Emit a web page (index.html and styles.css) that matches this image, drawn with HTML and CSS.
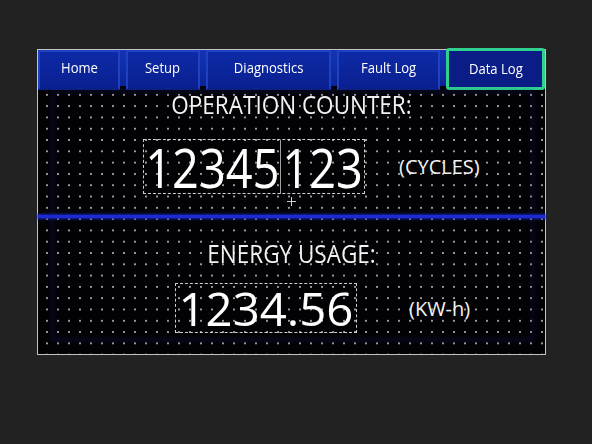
FILE: index.html
```html
<!DOCTYPE html>
<html lang="en">
<head>
    <meta charset="UTF-8">
    <meta name="viewport" content="width=device-width, initial-scale=1.0">
    <title>HMI - Data Log</title>
    <link rel="stylesheet" href="styles.css">
</head>
<body>
    <div class="screen">
        <nav class="tabs">
            <span class="tab"><span class="label">Home</span></span>
            <span class="tab"><span class="label">Setup</span></span>
            <span class="tab"><span class="label">Diagnostics</span></span>
            <span class="tab"><span class="label">Fault Log</span></span>
            <span class="tab active"><span class="label">Data Log</span></span>
        </nav>

        <section class="block counter">
            <h2 class="caption">OPERATION COUNTER:</h2>
            <div class="readout">
                <div class="field">
                    <span class="value">12345<i class="caret"></i>123</span>
                </div>
                <span class="unit">(CYCLES)</span>
            </div>
            <div class="cross"></div>
        </section>

        <div class="divider"></div>

        <section class="block energy">
            <h2 class="caption">ENERGY USAGE:</h2>
            <div class="readout">
                <div class="field">
                    <span class="value">1234.56</span>
                </div>
                <span class="unit">(KW-h)</span>
            </div>
        </section>

        <!-- faint selection frame left by the editor -->
        <div class="selection"></div>
    </div>
</body>
</html>
```

FILE: styles.css
```css
body {
    margin: 0;
    height: 444px;
    background-color: #222222;
    font-family: "Open Sans", "Noto Sans", sans-serif;
    color: #f2f2f2;
    overflow: hidden;
}

.screen {
    position: relative;
    width: 507px;
    height: 304px;
    margin: 49px 0 0 37px;
    border: 1px solid #c4c4c4;
    background-color: #020204;
    /* dotted design grid */
    background-image: radial-gradient(circle at 1px 1px, #9c9c9c 0.8px, transparent 1.3px);
    background-size: 11px 11.3px;
    background-position: 8px 10px;
}

/* tab bar */
.tabs {
    display: grid;
    grid-template-columns: 82px 74px 125px 103px 99px;
    gap: 6px;
    height: 36px;
    background: linear-gradient(#1534b4, #0c2496);
}

.tab {
    display: flex;
    justify-content: center;
    align-items: center;
    padding-bottom: 5px;
    background: linear-gradient(#0d2aa6, #0a2090);
    border: 2px solid #1d42c4;
    border-bottom-color: #0a1f86;
    font-size: 14.5px;
    color: #ffffff;
}

.tab.active {
    margin-top: -2px;
    height: 34px;
    padding-bottom: 2px;
    background: #0a1c86;
    border: 3px solid #2fd08e;
    border-radius: 3px;
}

.label {
    display: inline-block;
    transform: scaleX(0.9);
}

/* readout blocks */
.block {
    display: flex;
    flex-direction: column;
}

.counter {
    height: 129px;
}

.energy {
    height: 136px;
}

.caption {
    margin: 3px 0 0;
    font-size: 25px;
    font-weight: 400;
    line-height: 30px;
    text-align: center;
    transform: scaleX(0.9);
}

.energy .caption {
    margin-top: 20px;
}

.readout {
    display: flex;
    align-items: center;
}

.field {
    display: flex;
    justify-content: center;
    align-items: center;
    border: 1px dashed #cfcfcf;
}

.counter .readout {
    margin: 20px 0 0 105px;
}

.counter .field {
    width: 220px;
    height: 53px;
}

.energy .readout {
    margin: 15px 0 0 137px;
}

.energy .field {
    width: 180px;
    height: 48px;
}

.value {
    display: inline-flex;
    align-items: center;
    font-weight: 400;
    white-space: nowrap;
    color: #ffffff;
}

.counter .value {
    font-size: 54px;
    line-height: 54px;
    transform: scaleX(0.87);
}

.energy .value {
    font-size: 46px;
    line-height: 46px;
    transform: scaleX(1.03);
}

.caret {
    display: inline-block;
    width: 1px;
    height: 54px;
    margin: 0 1px;
    background-color: #b8b8b8;
}

.unit {
    font-size: 20px;
}

.counter .unit {
    margin-left: 34px;
}

.energy .unit {
    margin-left: 52px;
}

/* crosshair marker under the counter */
.cross {
    width: 9px;
    height: 9px;
    margin: 3px 0 0 249px;
    background:
        linear-gradient(#d0d0d0, #d0d0d0) center / 9px 1px no-repeat,
        linear-gradient(#d0d0d0, #d0d0d0) center / 1px 9px no-repeat;
}

.divider {
    height: 3px;
    background-color: #1c2bd6;
    box-shadow: 0 0 3px 1px #1a24a8;
}

.selection {
    position: absolute;
    left: 13px;
    right: 11px;
    top: 40px;
    bottom: 13px;
    border: 3px solid rgba(28, 40, 150, 0.25);
    filter: blur(2px);
    pointer-events: none;
}
```
